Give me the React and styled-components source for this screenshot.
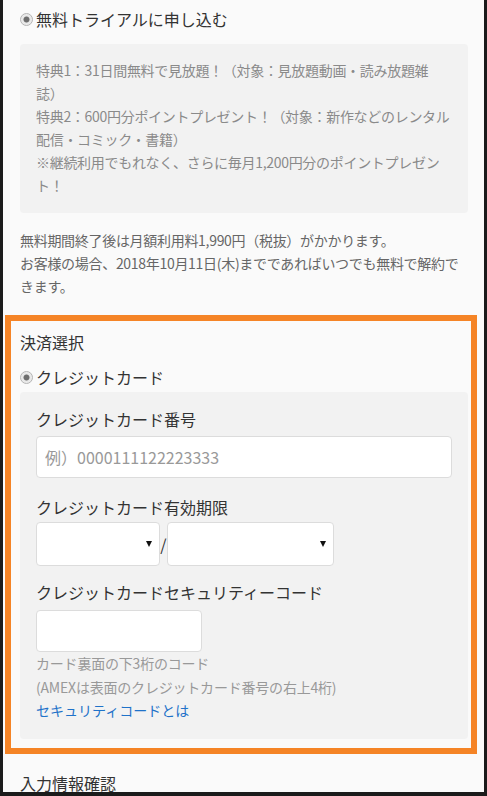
import React from "react";
import styled, { createGlobalStyle } from "styled-components";

const Global = createGlobalStyle`
  html, body { margin: 0; padding: 0; background: #1b1b1b; }
  body { font-family: "Noto Sans CJK JP", "Noto Sans", sans-serif; }
  * { box-sizing: border-box; }
`;

const Frame = styled.div`
  margin: 0 3px;
  height: 792px;
  overflow: hidden;
  background: #fafafa;
  padding: 7px 16px 0 17px;
  color: #333;
`;

const RadioRow = styled.label`
  display: flex;
  align-items: center;
  gap: 3px;
  font-size: 16px;
  line-height: 24px;
  color: #333;
  margin-top: ${(p) => p.$mt || 0}px;
`;

const Radio = styled.span`
  width: 13px;
  height: 13px;
  border-radius: 50%;
  border: 1px solid #b4b4b4;
  background: radial-gradient(circle at center, #6e6e6e 0 2.6px, #e6e6e6 3.4px, #f3f3f3 100%);
  flex: none;
`;

const InfoBox = styled.div`
  margin-top: 13px;
  background: #f2f2f2;
  border-radius: 4px;
  padding: 15px 12px 16px 16px;
  font-size: 14px;
  line-height: 23px;
  letter-spacing: -0.3px;
  color: #8a8a8a;
`;

const Note = styled.p`
  margin: 16px 0 0;
  font-size: 14px;
  line-height: 23px;
  letter-spacing: -0.3px;
  color: #666;
`;

const PaySection = styled.section`
  margin: 17px -9px 0 -15px;
  border: 6px solid #f58426;
  padding: 9px 3px 9px 9px;
`;

const SectionTitle = styled.div`
  font-size: 16px;
  line-height: 24px;
  color: #333;
`;

const CardBox = styled.div`
  margin-top: 3px;
  background: #f2f2f2;
  border-radius: 4px;
  padding: 15px 16px 16px;
`;

const FieldLabel = styled.div`
  font-size: 16px;
  line-height: 24px;
  color: #333;
  margin-top: ${(p) => p.$mt || 0}px;
`;

const TextInput = styled.input`
  display: block;
  width: ${(p) => p.$w || "100%"};
  height: 42px;
  margin-top: ${(p) => p.$mt || 0}px;
  border: 1px solid #dcdcdc;
  border-radius: 4px;
  background: #fff;
  padding: 0 8px;
  font-family: inherit;
  font-size: 16px;
  color: #333;
  outline: none;
  &::placeholder { color: #999; }
`;

const ExpiryRow = styled.div`
  display: flex;
  align-items: center;
  margin-top: 3px;
`;

const SelectWrap = styled.div`
  position: relative;
  width: ${(p) => p.$w}px;
  height: 44px;
  &::after {
    content: "";
    position: absolute;
    right: 8px;
    top: 19px;
    border-left: 3.5px solid transparent;
    border-right: 3.5px solid transparent;
    border-top: 6px solid #111;
    pointer-events: none;
  }
`;

const Select = styled.select`
  appearance: none;
  -webkit-appearance: none;
  width: 100%;
  height: 100%;
  border: 1px solid #dcdcdc;
  border-radius: 4px;
  background: #fff;
  font-family: inherit;
  font-size: 16px;
  outline: none;
`;

const Slash = styled.span`
  width: 7px;
  text-align: center;
  font-size: 16px;
  color: #333;
`;

const Hint = styled.div`
  font-size: 14px;
  line-height: 23.5px;
  color: #999;
  letter-spacing: -0.2px;
`;

const HelpLink = styled.a`
  display: block;
  font-size: 14px;
  line-height: 23.5px;
  color: #1f72c9;
  text-decoration: none;
`;

const NextTitle = styled.div`
  margin-top: 17px;
  font-size: 16px;
  line-height: 24px;
  color: #333;
`;

export default function App() {
  return (
    <>
      <Global />
      <Frame>
        <RadioRow>
          <Radio />
          無料トライアルに申し込む
        </RadioRow>
        <InfoBox>
          特典1：31日間無料で見放題！（対象：見放題動画・読み放題雑
          <br />
          誌）
          <br />
          特典2：600円分ポイントプレゼント！（対象：新作などのレンタル
          <br />
          配信・コミック・書籍）
          <br />
          ※継続利用でもれなく、さらに毎月1,200円分のポイントプレゼン
          <br />
          ト！
        </InfoBox>
        <Note>
          無料期間終了後は月額利用料1,990円（税抜）がかかります。
          <br />
          お客様の場合、2018年10月11日(木)までであればいつでも無料で解約で
          <br />
          きます。
        </Note>
        <PaySection>
          <SectionTitle>決済選択</SectionTitle>
          <RadioRow $mt={11}>
            <Radio />
            クレジットカード
          </RadioRow>
          <CardBox>
            <FieldLabel>クレジットカード番号</FieldLabel>
            <TextInput $mt={5} placeholder="例）0000111122223333" />
            <FieldLabel $mt={17}>クレジットカード有効期限</FieldLabel>
            <ExpiryRow>
              <SelectWrap $w={124}>
                <Select>
                  <option></option>
                </Select>
              </SelectWrap>
              <Slash>/</Slash>
              <SelectWrap $w={167}>
                <Select>
                  <option></option>
                </Select>
              </SelectWrap>
            </ExpiryRow>
            <FieldLabel $mt={14}>クレジットカードセキュリティーコード</FieldLabel>
            <TextInput $mt={6} $w="166px" />
            <Hint>カード裏面の下3桁のコード</Hint>
            <Hint>(AMEXは表面のクレジットカード番号の右上4桁)</Hint>
            <HelpLink href="#">セキュリティコードとは</HelpLink>
          </CardBox>
        </PaySection>
        <NextTitle>入力情報確認</NextTitle>
      </Frame>
    </>
  );
}
